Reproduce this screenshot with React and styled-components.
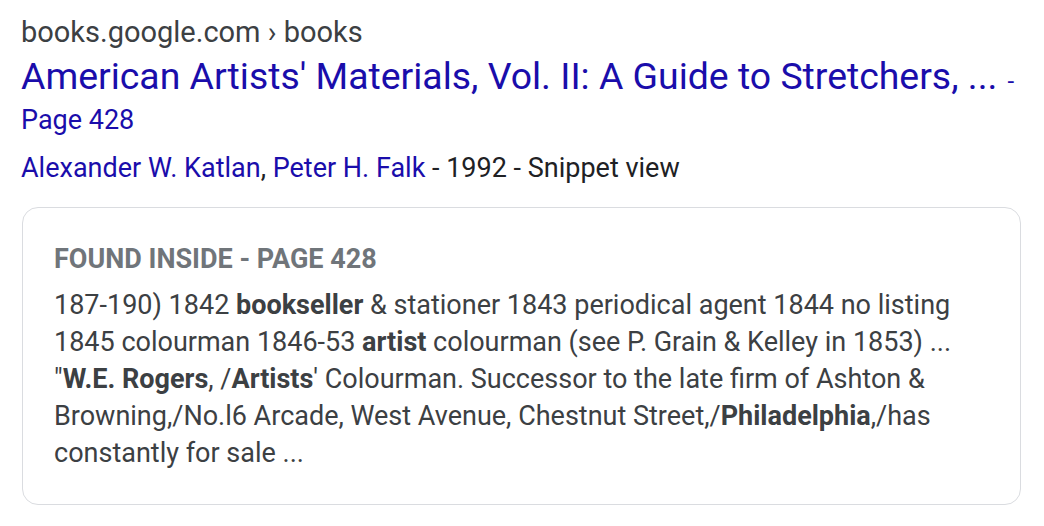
import React from "react";
import styled, { createGlobalStyle } from "styled-components";

const Global = createGlobalStyle`
  html, body { margin: 0; padding: 0; background: #ffffff; }
  body { font-family: Roboto, "Liberation Sans", Arial, sans-serif; }
`;

const Result = styled.div`
  width: 1044px;
  height: 526px;
  box-sizing: border-box;
  padding: 14px 24px 0 21px;
  background: #fff;
`;

const Url = styled.div`
  font-size: 29px;
  line-height: 36px;
  color: #3c4043;
`;

const TitleRow = styled.div`
  display: flex;
  align-items: baseline;
  gap: 10px;
  margin-top: 3px;
`;

const Title = styled.a`
  font-size: 37.4px;
  line-height: 47px;
  color: #1a0dab;
  text-decoration: none;
  white-space: nowrap;
`;

const Dash = styled.span`
  font-size: 24px;
  color: #1a0dab;
`;

const PageLink = styled.a`
  display: block;
  margin-top: 2px;
  font-size: 27px;
  line-height: 36px;
  color: #1a0dab;
  text-decoration: none;
`;

const Meta = styled.div`
  margin-top: 12px;
  font-size: 27px;
  line-height: 36px;
  color: #202124;
`;

const Author = styled.a`
  color: #1a0dab;
  text-decoration: none;
`;

const Card = styled.div`
  margin-top: 21px;
  margin-left: 1px;
  width: 999px;
  box-sizing: border-box;
  border: 1px solid #dadce0;
  border-radius: 16px;
  padding: 33px 32px 32px 31px;
`;

const Label = styled.div`
  font-size: 27px;
  line-height: 36px;
  font-weight: 700;
  color: #70757a;
`;

const Snippet = styled.div`
  margin-top: 10px;
  font-size: 27px;
  line-height: 37px;
  color: #3c4043;
  b { font-weight: 700; color: #3c4043; }
`;

export default function App() {
  return (
    <>
      <Global />
      <Result>
        <Url>books.google.com › books</Url>
        <TitleRow>
          <Title href="#">American Artists' Materials, Vol. II: A Guide to Stretchers, ...</Title>
          <Dash>-</Dash>
        </TitleRow>
        <PageLink href="#">Page 428</PageLink>
        <Meta>
          <Author href="#">Alexander W. Katlan</Author>, <Author href="#">Peter H. Falk</Author> - 1992 - Snippet view
        </Meta>
        <Card>
          <Label>FOUND INSIDE - PAGE 428</Label>
          <Snippet>
            187-190) 1842 <b>bookseller</b> &amp; stationer 1843 periodical agent 1844 no listing<br />
            1845 colourman 1846-53 <b>artist</b> colourman (see P. Grain &amp; Kelley in 1853) ...<br />
            "<b>W.E. Rogers</b>, /<b>Artists</b>' Colourman. Successor to the late firm of Ashton &amp;<br />
            Browning,/No.l6 Arcade, West Avenue, Chestnut Street,/<b>Philadelphia</b>,/has<br />
            constantly for sale ...
          </Snippet>
        </Card>
      </Result>
    </>
  );
}
